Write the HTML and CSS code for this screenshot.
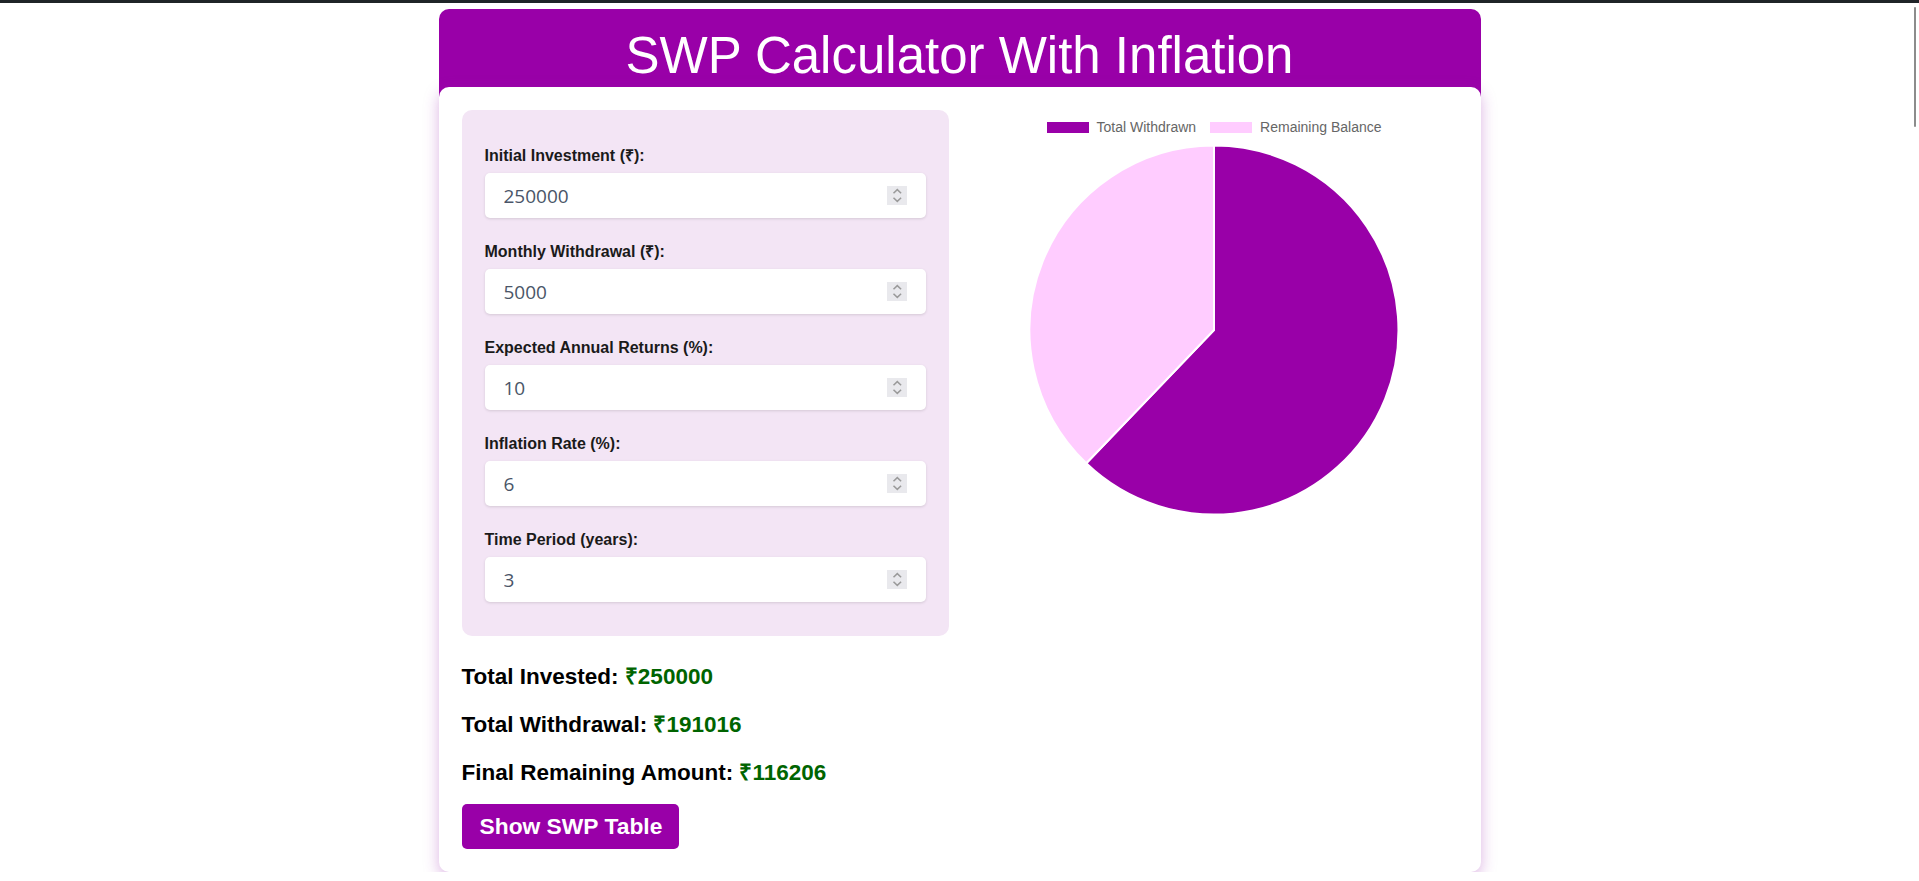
FILE: index.html
```html
<!DOCTYPE html>
<html lang="en">
<head>
<meta charset="utf-8">
<title>SWP Calculator With Inflation</title>
<link rel="stylesheet" href="styles.css">
</head>
<body>
<div class="topbar"></div>
<div class="scroll-thumb"></div>
<div class="page">
  <header class="hero">
    <h1>SWP Calculator With Inflation</h1>
  </header>
  <main class="card">
    <div class="grid">
      <section class="left">
        <div class="panel">
          <div class="field">
            <label for="inv">Initial Investment (₹):</label>
            <div class="input"><input id="inv" type="text" value="250000"><svg class="spin" viewBox="0 0 20 19"><rect width="20" height="19" fill="#e9e9ed"/><path d="M6.5 7.2 L10.3 3.6 L14.1 7.2" fill="none" stroke="#9a9a9a" stroke-width="1.5"/><path d="M6.5 11.8 L10.3 15.4 L14.1 11.8" fill="none" stroke="#9a9a9a" stroke-width="1.5"/></svg></div>
          </div>
          <div class="field">
            <label for="wd">Monthly Withdrawal (₹):</label>
            <div class="input"><input id="wd" type="text" value="5000"><svg class="spin" viewBox="0 0 20 19"><rect width="20" height="19" fill="#e9e9ed"/><path d="M6.5 7.2 L10.3 3.6 L14.1 7.2" fill="none" stroke="#9a9a9a" stroke-width="1.5"/><path d="M6.5 11.8 L10.3 15.4 L14.1 11.8" fill="none" stroke="#9a9a9a" stroke-width="1.5"/></svg></div>
          </div>
          <div class="field">
            <label for="ret">Expected Annual Returns (%):</label>
            <div class="input"><input id="ret" type="text" value="10"><svg class="spin" viewBox="0 0 20 19"><rect width="20" height="19" fill="#e9e9ed"/><path d="M6.5 7.2 L10.3 3.6 L14.1 7.2" fill="none" stroke="#9a9a9a" stroke-width="1.5"/><path d="M6.5 11.8 L10.3 15.4 L14.1 11.8" fill="none" stroke="#9a9a9a" stroke-width="1.5"/></svg></div>
          </div>
          <div class="field">
            <label for="inf">Inflation Rate (%):</label>
            <div class="input"><input id="inf" type="text" value="6"><svg class="spin" viewBox="0 0 20 19"><rect width="20" height="19" fill="#e9e9ed"/><path d="M6.5 7.2 L10.3 3.6 L14.1 7.2" fill="none" stroke="#9a9a9a" stroke-width="1.5"/><path d="M6.5 11.8 L10.3 15.4 L14.1 11.8" fill="none" stroke="#9a9a9a" stroke-width="1.5"/></svg></div>
          </div>
          <div class="field">
            <label for="yrs">Time Period (years):</label>
            <div class="input"><input id="yrs" type="text" value="3"><svg class="spin" viewBox="0 0 20 19"><rect width="20" height="19" fill="#e9e9ed"/><path d="M6.5 7.2 L10.3 3.6 L14.1 7.2" fill="none" stroke="#9a9a9a" stroke-width="1.5"/><path d="M6.5 11.8 L10.3 15.4 L14.1 11.8" fill="none" stroke="#9a9a9a" stroke-width="1.5"/></svg></div>
          </div>
        </div>
        <div class="results">
          <p>Total Invested: <span class="amt">₹250000</span></p>
          <p>Total Withdrawal: <span class="amt">₹191016</span></p>
          <p>Final Remaining Amount: <span class="amt">₹116206</span></p>
        </div>
        <button class="btn" type="button">Show SWP Table</button>
      </section>
      <section class="chart">
        <div class="legend">
          <div class="legend-item"><span class="sw sw-withdrawn"></span><span>Total Withdrawn</span></div>
          <div class="legend-item"><span class="sw sw-remaining"></span><span>Remaining Balance</span></div>
        </div>
        <svg class="pie" viewBox="0 0 370 370">
          <path d="M185 185 L185 0.5 A184.5 184.5 0 1 1 57.3 318.2 Z" fill="#9900a8" stroke="#ffffff" stroke-width="2" stroke-linejoin="round"/>
          <path d="M185 185 L57.3 318.2 A184.5 184.5 0 0 1 185 0.5 Z" fill="#ffccff" stroke="#ffffff" stroke-width="2" stroke-linejoin="round"/>
        </svg>
      </section>
    </div>
  </main>
</div>
</body>
</html>
```

FILE: styles.css
```css
* {
  box-sizing: border-box;
}

html, body {
  margin: 0;
  padding: 0;
  background: #ffffff;
}

body {
  font-family: "Liberation Sans", Arial, sans-serif;
  color: #000;
}

.topbar {
  height: 3px;
  background: #1f2428;
}

.scroll-thumb {
  position: fixed;
  top: 7px;
  right: 3px;
  width: 2px;
  height: 120px;
  background: #8c8c8c;
  border-radius: 1px;
}

.page {
  width: 1042px;
  margin: 6px auto 0;
}

.hero {
  background: #9900a8;
  border-radius: 10px 10px 0 0;
  padding: 17px 0 13px;
  text-align: center;
}

.hero h1 {
  margin: 0;
  font-weight: 400;
  font-size: 51px;
  line-height: 59px;
  color: #ffffff;
}

.card {
  position: relative;
  margin-top: -11px;
  background: #ffffff;
  border-radius: 10px;
  padding: 23px;
  box-shadow: 0 5px 15px rgba(156, 39, 176, 0.35);
}

.grid {
  display: grid;
  grid-template-columns: 1fr 1fr;
  gap: 22px;
}

.panel {
  background: #f3e5f5;
  border-radius: 10px;
  padding: 23px;
}

.field {
  padding: 14px 0 11px;
}

.field label {
  display: block;
  font-weight: 700;
  font-size: 16px;
  line-height: 18px;
  color: #1a1a1a;
  margin-bottom: 8px;
}

.input {
  display: flex;
  align-items: center;
  height: 45px;
  background: #ffffff;
  border-radius: 5px;
  box-shadow: 0 1px 3px rgba(0, 0, 0, 0.13);
  padding: 0 19px;
}

.input input {
  flex: 1;
  min-width: 0;
  border: 0;
  outline: 0;
  padding: 0;
  margin: 0;
  background: transparent;
  font-family: "Open Sans", "Noto Sans", sans-serif;
  font-size: 19px;
  color: #4a5568;
}

.spin {
  flex: none;
  width: 20px;
  height: 19px;
}

.results {
  margin-top: 28px;
}

.results p {
  margin: 0 0 22px;
  font-size: 22.5px;
  line-height: 26px;
  font-weight: 700;
  color: #000;
}

.results p:last-child {
  margin-bottom: 18px;
}

.amt {
  color: #006400;
}

.btn {
  display: inline-block;
  height: 45px;
  padding: 0 17px 0 18px;
  margin: 0;
  border: 0;
  border-radius: 5px;
  background: #9900a8;
  color: #ffffff;
  font-family: "Liberation Sans", Arial, sans-serif;
  font-weight: 700;
  font-size: 22.8px;
  line-height: 45px;
  cursor: pointer;
}

.chart {
  display: flex;
  flex-direction: column;
  align-items: center;
  padding-top: 9px;
}

.legend {
  display: flex;
  align-items: center;
  gap: 14px;
  height: 16px;
  font-family: "Liberation Sans", Arial, sans-serif;
  font-size: 14px;
  line-height: 16px;
  color: #666666;
}

.legend-item {
  display: flex;
  align-items: center;
  gap: 8px;
}

.sw {
  display: block;
  width: 42px;
  height: 11px;
}

.sw-withdrawn {
  background: #9900a8;
}

.sw-remaining {
  background: #ffccff;
}

.pie {
  display: block;
  margin-top: 10px;
  width: 370px;
  height: 370px;
}
```
